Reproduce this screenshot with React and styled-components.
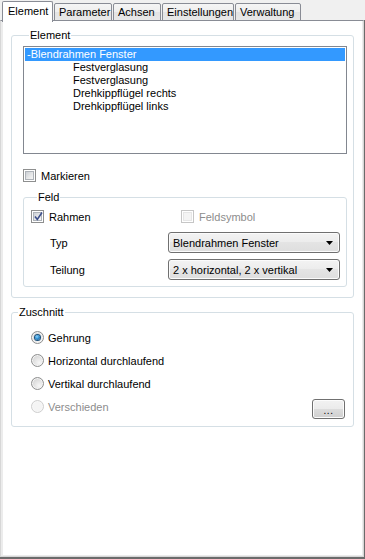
import React from "react";
import styled, { createGlobalStyle, css } from "styled-components";

const Global = createGlobalStyle`
  html, body { margin: 0; padding: 0; }
  body {
    background: #f0f0f0;
    font-family: "Liberation Sans", Arial, sans-serif;
    font-size: 11px;
    color: #000;
  }
  * { box-sizing: border-box; }
`;

const Window = styled.div`
  width: 365px;
  height: 559px;
  display: flex;
  flex-direction: column;
  background: #f0f0f0;
`;

const TabStrip = styled.div`
  height: 21px;
  display: flex;
  align-items: flex-end;
  padding-left: 2px;
  position: relative;
  z-index: 2;
`;

const Tab = styled.div`
  width: ${(p) => p.$w}px;
  height: ${(p) => (p.$active ? 21 : 18)}px;
  margin-left: ${(p) => p.$ml || 0}px;
  padding-top: ${(p) => (p.$active ? 3 : 2)}px;
  padding-left: ${(p) => p.$pl}px;
  border: 1px solid #898c95;
  border-bottom: ${(p) => (p.$active ? "none" : "1px solid #898c95")};
  border-radius: 2px 2px 0 0;
  background: ${(p) =>
    p.$active ? "#ffffff" : "linear-gradient(#f5f5f5 0%, #eeeeee 50%, #e3e3e3 50%, #e8e8e8 100%)"};
  white-space: nowrap;
  line-height: 13px;
  margin-bottom: ${(p) => (p.$active ? -1 : 0)}px;
`;

const Frame = styled.div`
  flex: 1;
  display: flex;
  border-right: 2px solid #6b6b6b;
  border-bottom: 2px solid #6b6b6b;
  margin-top: -1px;
`;

const Panel = styled.div`
  flex: 1;
  background: #ffffff;
  border: 1px solid #898c95;
  border-left-color: #d7d7d7;
  border-right-color: #d7d7d7;
  border-bottom-color: #d7d7d7;
  box-shadow: inset 2px 0 0 #ececec, inset 0 -1px 0 #ececec, inset -1px 0 0 #ececec;
  padding: 8px 9px 0 10px;
  display: flex;
  flex-direction: column;
  gap: 8px;
`;

const Group = styled.fieldset`
  margin: 0;
  margin-top: ${(p) => p.$mt || 0}px;
  min-width: 0;
  border: 1px solid #d5dfe5;
  border-radius: 3px;
  padding: ${(p) => p.$pad};
  display: flex;
  flex-direction: column;
`;

const Legend = styled.legend`
  padding: 0 1px;
  margin-left: ${(p) => p.$ml || 6}px;
  line-height: 13px;
  font-size: 11px;
`;

const ListBox = styled.div`
  height: 108px;
  border: 1px solid #828790;
  background: #fff;
  padding: 1px;
  margin-top: 1px;
  display: flex;
  flex-direction: column;
`;

const ListItem = styled.div`
  height: 13px;
  line-height: 13px;
  padding-left: ${(p) => (p.$child ? 48 : 2)}px;
  white-space: nowrap;
  ${(p) =>
    p.$selected &&
    css`
      background: #3399ff;
      color: #fff;
    `}
`;

const CheckRow = styled.label`
  display: flex;
  align-items: center;
  height: 13px;
  gap: 5px;
  width: ${(p) => (p.$w ? `${p.$w}px` : "auto")};
  flex: none;
  color: ${(p) => (p.$disabled ? "#8d8d8d" : "#000")};
  white-space: nowrap;
`;

const Box = styled.span`
  width: 13px;
  height: 13px;
  flex: none;
  border: 1px solid ${(p) => (p.$disabled ? "#c6c6c6" : "#8e8f8f")};
  background: #fff;
  padding: 1px;
  display: flex;
  position: relative;
  &::before {
    content: "";
    flex: 1;
    border: 1px solid ${(p) => (p.$disabled ? "#e6e6e6" : "#aeb3b9")};
    background: ${(p) =>
      p.$disabled ? "#f4f4f4" : "linear-gradient(135deg, #cbcfd5 0%, #e8e9ea 60%, #f6f6f6 100%)"};
  }
`;

const Check = styled.svg`
  position: absolute;
  left: 1px;
  top: 0px;
`;

const CheckBox = ({ checked, disabled }) => (
  <Box $disabled={disabled}>
    {checked && (
      <Check width="11" height="11" viewBox="0 0 11 11">
        <path d="M2 5.5 L4.3 8.5 L9 1.5" fill="none" stroke="#3d4f8a" strokeWidth="1.6" />
      </Check>
    )}
  </Box>
);

const Row = styled.div`
  display: flex;
  align-items: center;
  padding-left: ${(p) => p.$pl || 0}px;
  margin-top: ${(p) => p.$mt || 0}px;
`;

const FieldLabel = styled.span`
  width: ${(p) => p.$w}px;
  flex: none;
`;

const Combo = styled.div`
  width: 172px;
  height: 21px;
  border: 1px solid #707070;
  border-radius: 3px;
  background: linear-gradient(#f3f3f3 0%, #ececec 50%, #e4e4e4 50%, #dedede 100%);
  box-shadow: inset 0 0 0 1px #fbfbfb;
  display: flex;
  align-items: center;
  padding: 0 6px 0 4px;
  justify-content: space-between;
  white-space: nowrap;
`;

const Arrow = styled.svg`
  flex: none;
`;

const ComboBox = ({ value }) => (
  <Combo>
    <span>{value}</span>
    <Arrow width="7" height="4" viewBox="0 0 7 4">
      <path d="M0 0 H7 L3.5 4 Z" fill="#000" />
    </Arrow>
  </Combo>
);

const RadioRow = styled.label`
  display: flex;
  align-items: center;
  height: 13px;
  gap: 4px;
  color: ${(p) => (p.$disabled ? "#8d8d8d" : "#000")};
  white-space: nowrap;
`;

const RadioCircle = styled.span`
  width: 13px;
  height: 13px;
  flex: none;
  border-radius: 50%;
  border: 1px solid ${(p) => (p.$disabled ? "#cfcfcf" : "#8e8f8f")};
  background: ${(p) =>
    p.$disabled
      ? "#f4f4f4"
      : "radial-gradient(circle at 65% 70%, #f7f7f7 0%, #e3e3e3 45%, #c9c9c9 100%)"};
  box-shadow: inset 0 0 0 1px ${(p) => (p.$disabled ? "#f7f7f7" : "#f4f4f4")};
  display: flex;
  align-items: center;
  justify-content: center;
  &::after {
    content: "";
    display: ${(p) => (p.$checked ? "block" : "none")};
    width: 5px;
    height: 5px;
    border-radius: 50%;
    background: radial-gradient(circle at 40% 35%, #8fd6ff 0%, #2f8fd0 45%, #104d85 100%);
    box-shadow: 0 0 0 1px #1b4f7a;
  }
`;

const RadioList = styled.div`
  display: flex;
  flex-direction: column;
  gap: 10px;
  padding-left: 19px;
`;

const LastRow = styled.div`
  height: 13px;
  display: flex;
  align-items: center;
  justify-content: space-between;
`;

const SmallButton = styled.div`
  width: 33px;
  height: 20px;
  flex: none;
  border: 1px solid #707070;
  border-radius: 3px;
  background: linear-gradient(#f2f2f2 0%, #ebebeb 50%, #dddddd 50%, #cfcfcf 100%);
  box-shadow: inset 0 0 0 1px #fcfcfc;
  display: flex;
  align-items: center;
  justify-content: center;
  padding-top: 2px;
  font-size: 10px;
  letter-spacing: 0.5px;
  margin-right: 8px;
  margin-top: 5px;
`;

const Radio = ({ checked, disabled, children }) => (
  <RadioRow $disabled={disabled}>
    <RadioCircle $checked={checked} $disabled={disabled} />
    {children}
  </RadioRow>
);

export default function App() {
  return (
    <>
      <Global />
      <Window>
        <TabStrip>
          <Tab $active $w={51} $pl={5}>Element</Tab>
          <Tab $w={58} $ml={1} $pl={4}>Parameter</Tab>
          <Tab $w={48} $ml={1} $pl={4}>Achsen</Tab>
          <Tab $w={72} $ml={1} $pl={4}>Einstellungen</Tab>
          <Tab $w={66} $ml={1} $pl={4}>Verwaltung</Tab>
        </TabStrip>
        <Frame>
          <Panel>
            <Group $pad="3px 6px 10px 11px">
              <Legend>Element</Legend>
              <ListBox>
                <ListItem $selected>-Blendrahmen Fenster</ListItem>
                <ListItem $child>Festverglasung</ListItem>
                <ListItem $child>Festverglasung</ListItem>
                <ListItem $child>Drehkippflügel rechts</ListItem>
                <ListItem $child>Drehkippflügel links</ListItem>
              </ListBox>
              <Row $mt={15}>
                <CheckRow>
                  <CheckBox />
                  Markieren
                </CheckRow>
              </Row>
              <Group $pad="6px 6px 6px 7px" $mt={9}>
                <Legend $ml={6}>Feld</Legend>
                <Row>
                  <CheckRow $w={150}>
                    <CheckBox checked />
                    Rahmen
                  </CheckRow>
                  <CheckRow $disabled>
                    <CheckBox disabled />
                    Feldsymbol
                  </CheckRow>
                </Row>
                <Row $pl={19} $mt={9}>
                  <FieldLabel $w={118}>Typ</FieldLabel>
                  <ComboBox value="Blendrahmen Fenster" />
                </Row>
                <Row $pl={19} $mt={6}>
                  <FieldLabel $w={118}>Teilung</FieldLabel>
                  <ComboBox value="2 x horizontal, 2 x vertikal" />
                </Row>
              </Group>
            </Group>
            <Group $pad="12px 0 13px 0">
              <Legend>Zuschnitt</Legend>
              <RadioList>
                <Radio checked>Gehrung</Radio>
                <Radio>Horizontal durchlaufend</Radio>
                <Radio>Vertikal durchlaufend</Radio>
                <LastRow>
                  <Radio disabled>Verschieden</Radio>
                  <SmallButton>...</SmallButton>
                </LastRow>
              </RadioList>
            </Group>
          </Panel>
        </Frame>
      </Window>
    </>
  );
}
